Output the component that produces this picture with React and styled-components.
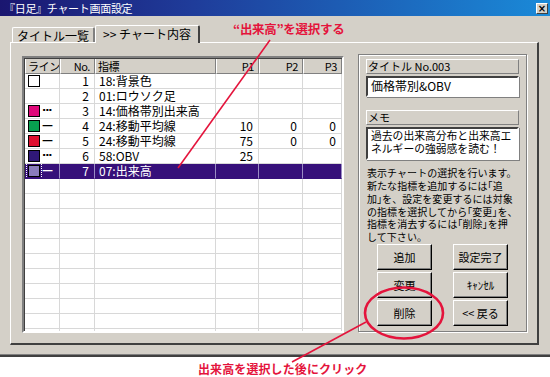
import React from 'react';
import styled, { createGlobalStyle } from 'styled-components';

const GlobalStyle = createGlobalStyle`
  html, body {
    margin: 0;
    padding: 0;
    background: #ffffff;
  }
  body {
    font-family: "Noto Sans CJK JP", "DejaVu Sans", sans-serif;
    font-size: 12px;
    color: #000;
  }
`;

const Page = styled.div`
  position: relative;
  width: 550px;
  height: 377px;
  overflow: hidden;
  background: #fff;
`;

const Window = styled.div`
  width: 550px;
  height: 357px;
  box-sizing: border-box;
  background: #d4d0c8;
  border-bottom: 2px solid #404040;
  box-shadow: inset 0 -1px 0 #808080;
  display: flex;
  flex-direction: column;
`;

const TitleBar = styled.div`
  height: 16px;
  flex: none;
  display: flex;
  align-items: center;
  justify-content: space-between;
  padding: 0 2px 0 4px;
  background: linear-gradient(to right, #1a1670 0%, #1f3c9a 35%, #1a8ad8 100%);
`;

const TitleText = styled.span`
  color: #fff;
  font-size: 11px;
  line-height: 16px;
  letter-spacing: -0.3px;
`;

const CloseButton = styled.span`
  width: 10px;
  height: 9px;
  background: #d4d0c8;
  border: 1px solid;
  border-color: #fff #404040 #404040 #fff;
  font-size: 10px;
  line-height: 9px;
  text-align: center;
  font-weight: bold;
  font-family: "DejaVu Sans", sans-serif;
`;

const WindowBody = styled.div`
  padding: 9px 11px 0 10px;
  display: flex;
  flex-direction: column;
`;

const Tabs = styled.div`
  display: flex;
  align-items: flex-end;
  height: 17px;
  padding-left: 2px;
`;

const Tab = styled.div`
  box-sizing: border-box;
  height: ${p => (p.$active ? '18px' : '15px')};
  margin-bottom: ${p => (p.$active ? '-1px' : '0')};
  padding: 0 ${p => (p.$active ? '7px' : '4px')};
  background: #d4d0c8;
  border-top: 1px solid #fff;
  border-left: 1px solid #fff;
  border-right: 2px solid ${p => (p.$active ? '#404040' : '#808080')};
  border-radius: 2px 2px 0 0;
  font-size: 12px;
  line-height: 15px;
  white-space: nowrap;
  position: relative;
  z-index: ${p => (p.$active ? 1 : 0)};
`;

const TabPanel = styled.div`
  height: 303px;
  box-sizing: border-box;
  display: flex;
  gap: 14px;
  padding: 13px 11px 0 11px;
  border-top: 1px solid #fff;
  border-left: 1px solid #fff;
  border-right: 2px solid #404040;
  border-bottom: 2px solid #404040;
`;

const ListView = styled.div`
  width: 322px;
  height: 277px;
  flex: none;
  box-sizing: border-box;
  border: 2px solid;
  border-color: #808080 #fff #fff #808080;
  box-shadow: inset 1px 1px 0 #404040;
  background: #fff;
  overflow: hidden;
`;

const COLS = '35px 35px 121px 43px 44px 1fr';

const HeaderRow = styled.div`
  display: grid;
  grid-template-columns: ${COLS};
  height: 15px;
  margin-left: 1px;
  margin-top: 1px;
`;

const HeaderCell = styled.div`
  background: #d4d0c8;
  border-right: 1px solid #808080;
  border-left: 1px solid #fff;
  border-bottom: 1px solid #808080;
  font-size: 11px;
  line-height: 14px;
  padding: 0 ${p => (p.$align === 'right' ? 4 : 1)}px 0 2px;
  text-align: ${p => p.$align || 'left'};
  letter-spacing: -0.4px;
  white-space: nowrap;
  overflow: hidden;
`;

const Row = styled.div`
  display: grid;
  grid-template-columns: ${COLS};
  height: 15px;
  margin-left: 1px;
  background: ${p => (p.$selected ? '#36107a' : 'transparent')};
  color: ${p => (p.$selected ? '#fff' : '#000')};
`;

const Cell = styled.div`
  box-sizing: border-box;
  height: 15px;
  border-right: 1px solid ${p => (p.$selected ? '#9a8cc4' : '#d8d8d8')};
  border-bottom: 1px solid ${p => (p.$selected ? '#36107a' : '#d8d8d8')};
  padding: 0 5px 0 4px;
  font-size: 12px;
  line-height: 14px;
  white-space: nowrap;
  overflow: hidden;
  display: flex;
  align-items: center;
  justify-content: ${p => (p.$align === 'right' ? 'flex-end' : 'flex-start')};
`;

const LineCell = styled(Cell)`
  gap: 2px;
  padding-left: 3px;
`;

const Swatch = styled.span`
  width: 10px;
  height: 10px;
  background: ${p => p.$color};
  border: 1px solid #000;
  outline: ${p => (p.$focus ? '1px dotted #fff' : 'none')};
  outline-offset: 1px;
  flex: none;
`;

const LineMark = styled.span`
  font-size: 11px;
  font-weight: bold;
  letter-spacing: -1px;
  line-height: 12px;
  font-family: "DejaVu Sans", sans-serif;
`;

const SideGroup = styled.div`
  width: 169px;
  height: 278px;
  flex: none;
  box-sizing: border-box;
  border: 1px solid #808080;
  box-shadow: 1px 1px 0 #fff, inset 1px 1px 0 #fff;
  padding: 4px 7px 5px 7px;
  display: flex;
  flex-direction: column;
  margin-top: -2px;
`;

const FieldLabel = styled.div`
  height: 13px;
  border: 1px solid;
  border-color: #fff #808080 #808080 #fff;
  font-size: 11px;
  line-height: 13px;
  padding-left: 1px;
  margin-bottom: 2px;
  margin-top: ${p => p.$top || 0}px;
`;

const TextBox = styled.div`
  background: #fff;
  border: 2px solid;
  border-color: #404040 #fff #fff #404040;
  box-shadow: 1px 1px 0 #808080;
  padding: 0 2px 0 3px;
  font-size: ${p => p.$size || 12}px;
  line-height: ${p => p.$lh || 16}px;
  height: ${p => p.$h}px;
  white-space: nowrap;
  overflow: hidden;
`;

const Description = styled.p`
  margin: 7px 0 0 1px;
  font-size: 10px;
  line-height: 12.8px;
  letter-spacing: 0.05px;
  white-space: nowrap;
`;

const ButtonGrid = styled.div`
  margin-top: auto;
  display: grid;
  grid-template-columns: 55px 55px;
  justify-content: center;
  column-gap: 21px;
  row-gap: 2px;
`;

const Button = styled.div`
  height: 26px;
  box-sizing: border-box;
  border: 1px solid;
  border-color: #fff #000 #000 #fff;
  box-shadow: inset -1px -1px 0 #808080;
  background: #d4d0c8;
  font-size: 11px;
  display: flex;
  align-items: center;
  justify-content: center;
  white-space: nowrap;
`;

const TopNote = styled.div`
  position: absolute;
  left: 233px;
  top: 21px;
  color: #e4143c;
  font-weight: bold;
  font-size: 12.5px;
  line-height: 16px;
  letter-spacing: -0.3px;
`;

const Caption = styled.div`
  padding-left: 198px;
  padding-top: 5px;
  color: #e4143c;
  font-weight: bold;
  font-size: 12px;
  line-height: 14px;
  letter-spacing: 0.1px;
`;

const Overlay = styled.svg`
  position: absolute;
  left: 0;
  top: 0;
  pointer-events: none;
`;

const rows = [
  { no: 1, name: '18:背景色', color: '#fff' },
  { no: 2, name: '01:ロウソク足' },
  { no: 3, name: '14:価格帯別出来高', color: '#e0087a', mark: '···' },
  { no: 4, name: '24:移動平均線', color: '#08a050', mark: '—', p: ['10', '0', '0'] },
  { no: 5, name: '24:移動平均線', color: '#e01030', mark: '—', p: ['75', '0', '0'] },
  { no: 6, name: '58:OBV', color: '#301878', mark: '···', p: ['25', '', ''] },
  { no: 7, name: '07:出来高', color: '#8a7cbc', mark: '—', selected: true },
];

const emptyRows = Array.from({ length: 11 }, (_, i) => i);

const App = () => {
  return (
    <Page>
      <GlobalStyle />
      <Window>
        <TitleBar>
          <TitleText>『日足』チャート画面設定</TitleText>
          <CloseButton>×</CloseButton>
        </TitleBar>
        <WindowBody>
          <Tabs>
            <Tab>タイトル一覧</Tab>
            <Tab $active>&gt;&gt; チャート内容</Tab>
          </Tabs>
          <TabPanel>
            <ListView>
              <HeaderRow>
                <HeaderCell>ライン</HeaderCell>
                <HeaderCell $align="right">No.</HeaderCell>
                <HeaderCell>指標</HeaderCell>
                <HeaderCell $align="right">P1</HeaderCell>
                <HeaderCell $align="right">P2</HeaderCell>
                <HeaderCell $align="right">P3</HeaderCell>
              </HeaderRow>
              {rows.map(r => {
                const p = r.p || ['', '', ''];
                return (
                  <Row key={r.no} $selected={r.selected}>
                    <LineCell $selected={r.selected}>
                      {r.color && <Swatch $color={r.color} $focus={r.selected} />}
                      {r.mark && <LineMark>{r.mark}</LineMark>}
                    </LineCell>
                    <Cell $align="right" $selected={r.selected}>{r.no}</Cell>
                    <Cell $selected={r.selected}>{r.name}</Cell>
                    <Cell $align="right" $selected={r.selected}>{p[0]}</Cell>
                    <Cell $align="right" $selected={r.selected}>{p[1]}</Cell>
                    <Cell $align="right" $selected={r.selected}>{p[2]}</Cell>
                  </Row>
                );
              })}
              {emptyRows.map(i => (
                <Row key={'e' + i}>
                  <Cell />
                  <Cell />
                  <Cell />
                  <Cell />
                  <Cell />
                  <Cell />
                </Row>
              ))}
            </ListView>
            <SideGroup>
              <FieldLabel>タイトル No.003</FieldLabel>
              <TextBox $h={17}>価格帯別&amp;OBV</TextBox>
              <FieldLabel $top={13}>メモ</FieldLabel>
              <TextBox $h={30} $size={10.8} $lh={13}>
                過去の出来高分布と出来高エ
                <br />
                ネルギーの強弱感を読む！
              </TextBox>
              <Description>
                表示チャートの選択を行います。
                <br />
                新たな指標を追加するには｢追
                <br />
                加｣を、設定を変更するには対象
                <br />
                の指標を選択してから｢変更｣を、
                <br />
                指標を消去するには｢削除｣を押
                <br />
                して下さい。
              </Description>
              <ButtonGrid>
                <Button>追加</Button>
                <Button>設定完了</Button>
                <Button>変更</Button>
                <Button>ｷｬﾝｾﾙ</Button>
                <Button>削除</Button>
                <Button>&lt;&lt; 戻る</Button>
              </ButtonGrid>
            </SideGroup>
          </TabPanel>
        </WindowBody>
      </Window>
      <Caption>出来高を選択した後にクリック</Caption>
      <TopNote>“出来高”を選択する</TopNote>
      <Overlay width="550" height="377" viewBox="0 0 550 377">
        <line x1="270" y1="40" x2="178" y2="168" stroke="#e4143c" strokeWidth="1.6" />
        <ellipse cx="404" cy="313" rx="39" ry="25.5" fill="none" stroke="#e4143c" strokeWidth="2.6" />
        <line x1="366" y1="322" x2="292" y2="362" stroke="#e4143c" strokeWidth="1.6" />
      </Overlay>
    </Page>
  );
};

export default App;
